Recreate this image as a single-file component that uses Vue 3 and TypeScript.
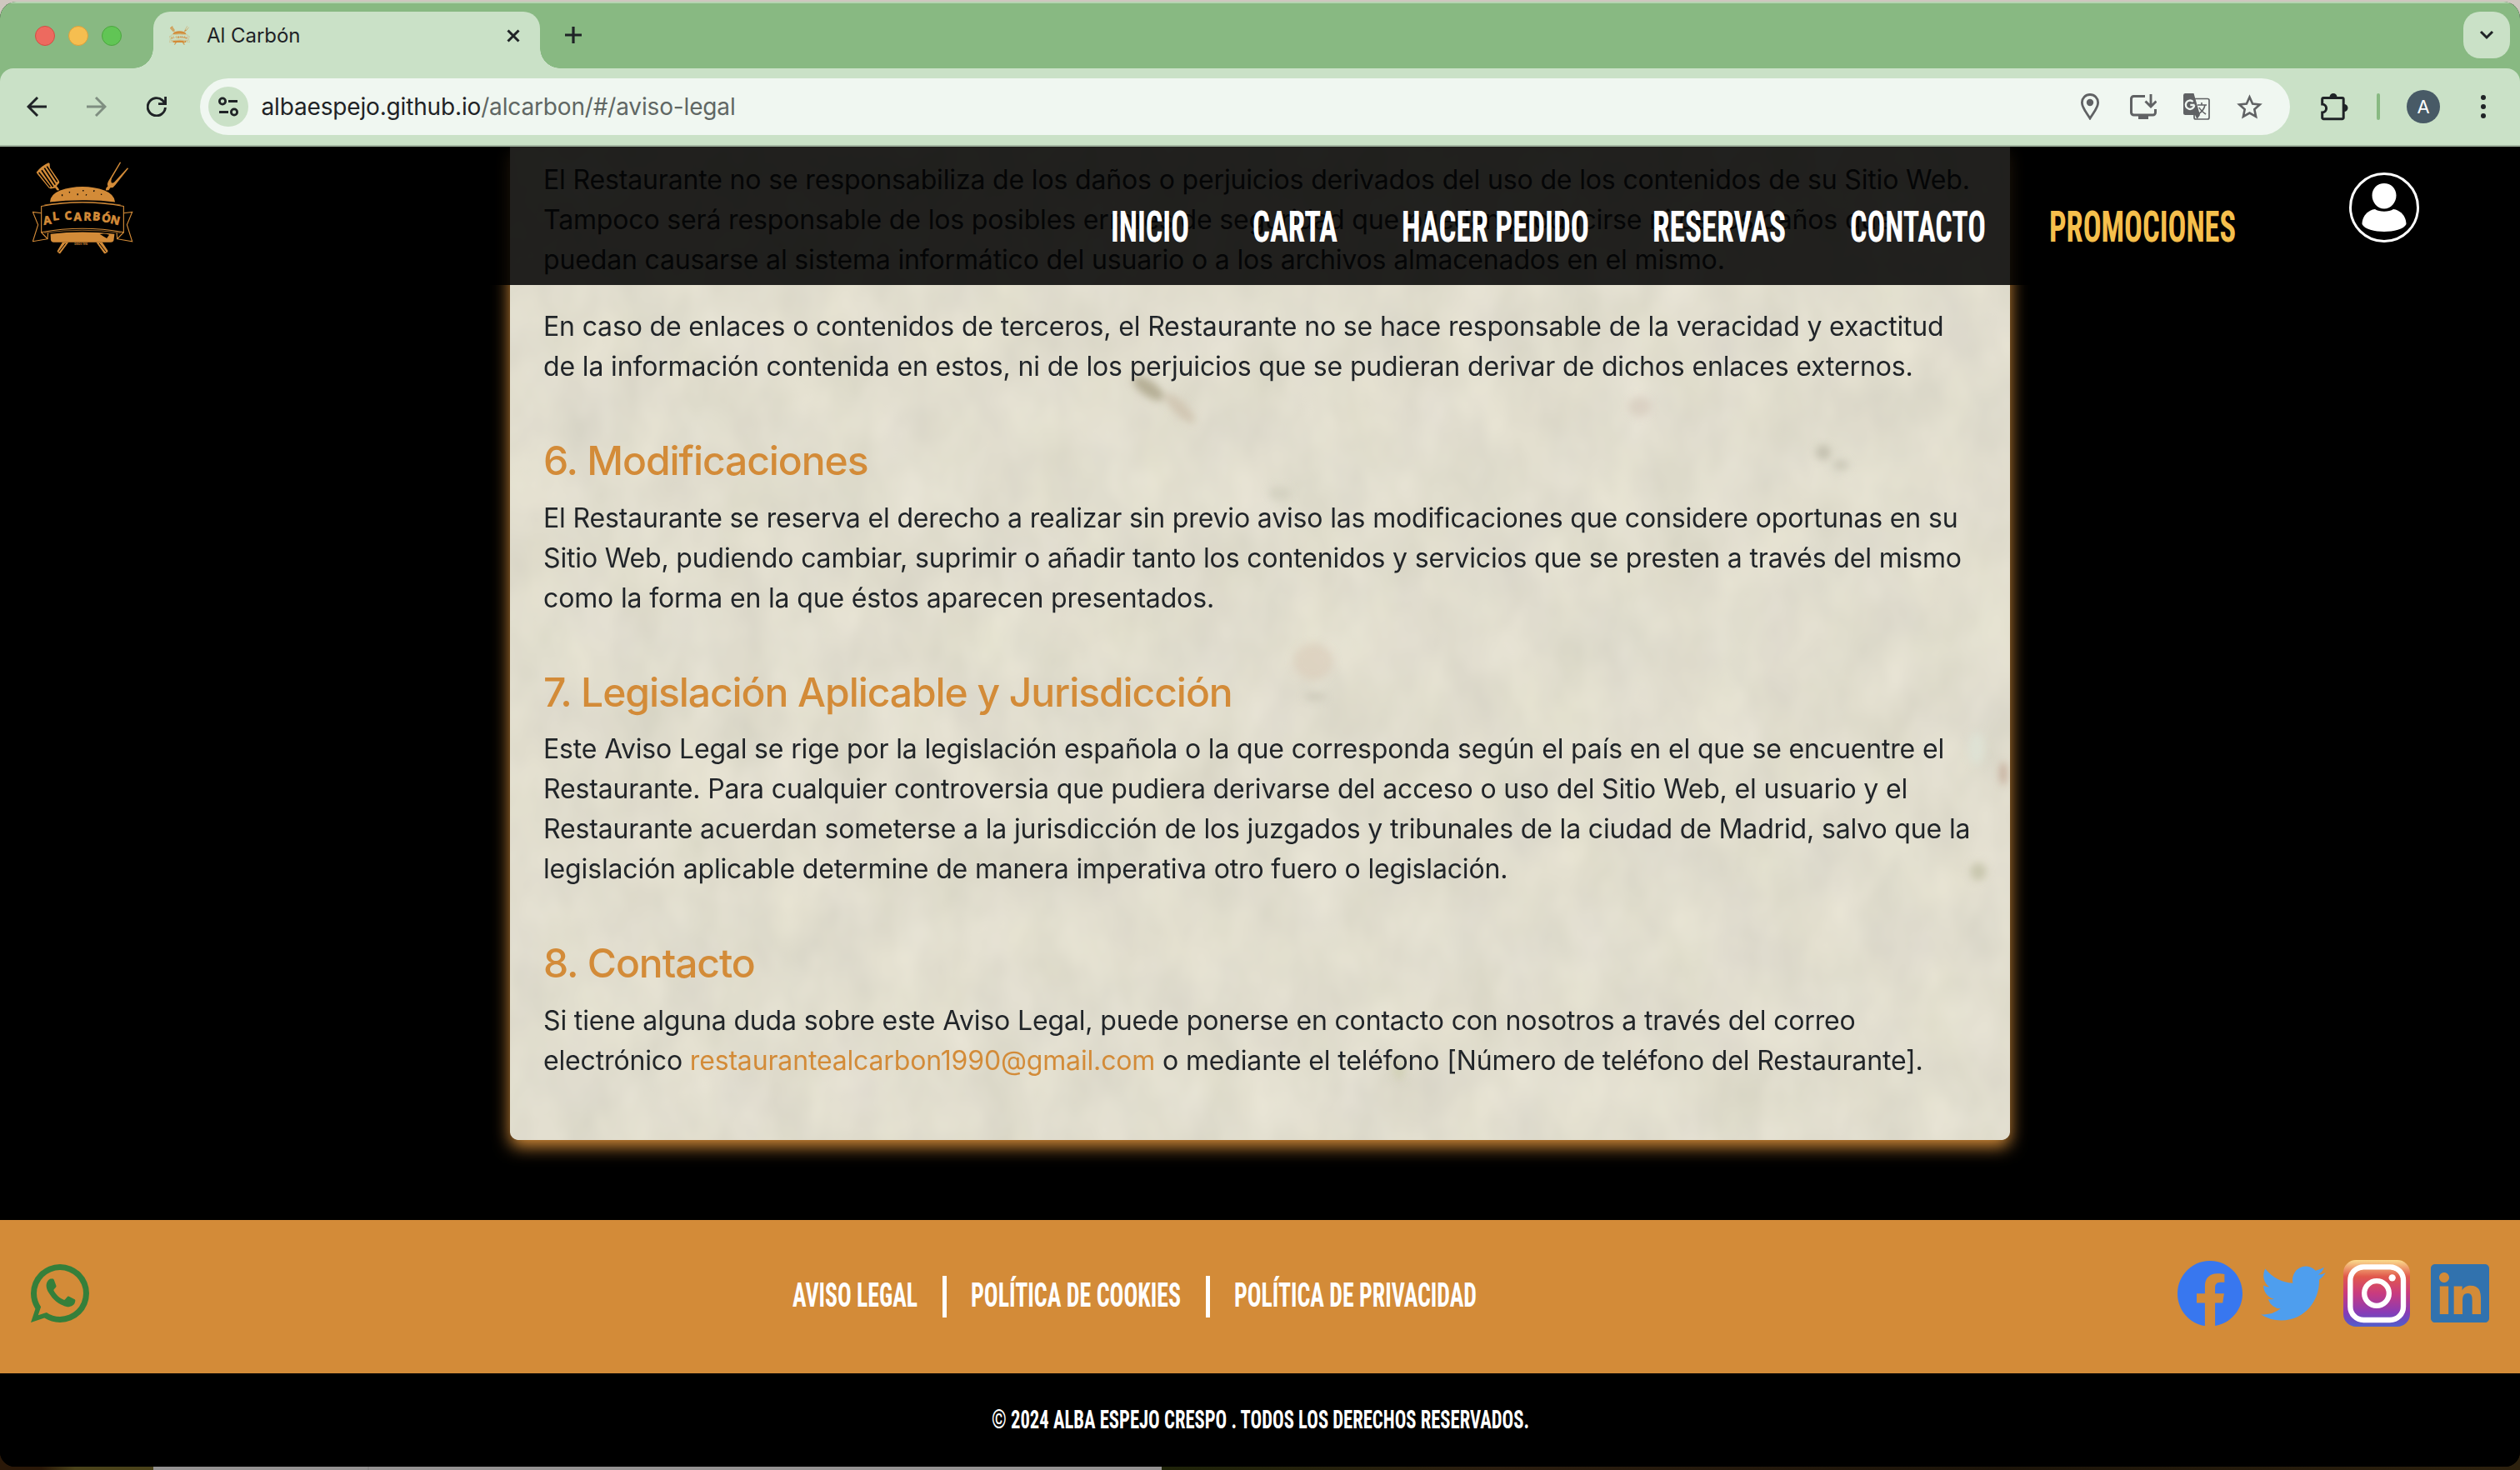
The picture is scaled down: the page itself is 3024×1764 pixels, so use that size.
<script setup lang="ts">
interface NavItem { label: string; width: number; promo?: boolean }
interface Section { title?: string; lines: string[] }

const nav: NavItem[] = [
  { label: 'INICIO', width: 90 },
  { label: 'CARTA', width: 98 },
  { label: 'HACER PEDIDO', width: 221 },
  { label: 'RESERVAS', width: 156 },
  { label: 'CONTACTO', width: 159 },
  { label: 'PROMOCIONES', width: 220, promo: true },
]

const sections: Section[] = [
  {
    lines: [
      'El Restaurante no se responsabiliza de los daños o perjuicios derivados del uso de los contenidos de su Sitio Web.',
      'Tampoco será responsable de los posibles errores de seguridad que puedan producirse ni de los daños que',
      'puedan causarse al sistema informático del usuario o a los archivos almacenados en el mismo.',
    ],
  },
  {
    lines: [
      'En caso de enlaces o contenidos de terceros, el Restaurante no se hace responsable de la veracidad y exactitud',
      'de la información contenida en estos, ni de los perjuicios que se pudieran derivar de dichos enlaces externos.',
    ],
  },
  {
    title: '6. Modificaciones',
    lines: [
      'El Restaurante se reserva el derecho a realizar sin previo aviso las modificaciones que considere oportunas en su',
      'Sitio Web, pudiendo cambiar, suprimir o añadir tanto los contenidos y servicios que se presten a través del mismo',
      'como la forma en la que éstos aparecen presentados.',
    ],
  },
  {
    title: '7. Legislación Aplicable y Jurisdicción',
    lines: [
      'Este Aviso Legal se rige por la legislación española o la que corresponda según el país en el que se encuentre el',
      'Restaurante. Para cualquier controversia que pudiera derivarse del acceso o uso del Sitio Web, el usuario y el',
      'Restaurante acuerdan someterse a la jurisdicción de los juzgados y tribunales de la ciudad de Madrid, salvo que la',
      'legislación aplicable determine de manera imperativa otro fuero o legislación.',
    ],
  },
]

const legal = [
  { label: 'AVISO LEGAL', width: 148 },
  { label: 'POLÍTICA DE COOKIES', width: 250 },
  { label: 'POLÍTICA DE PRIVACIDAD', width: 289 },
]

const brandLetters = [
  { c: 'A', x: 99, y: 268, r: -8 },
  { c: 'L', x: 132, y: 252, r: -6 },
  { c: 'C', x: 175, y: 251, r: -6 },
  { c: 'A', x: 207, y: 253, r: 0 },
  { c: 'R', x: 242, y: 252, r: 2 },
  { c: 'B', x: 274, y: 251, r: 5 },
  { c: 'Ó', x: 306, y: 256, r: 8 },
  { c: 'N', x: 337, y: 261, r: 14 },
]
</script>

<template>
  <svg class="defs" width="0" height="0" aria-hidden="true">
    <defs>
      <symbol id="brand" viewBox="58 40 364 334">
        <g fill="#d38b38">
          <path d="M72 78 Q92 54 116 44 L120 47 L121 62 L154 110 L155 116 L145 128 L152 137 L155 143 L147 144 L140 135 L124 138 L117 135 L75 84Z" />
          <path d="M374 41 L377 44 L344 100 Q340 110 343 116 Q349 119 355 112 L401 62 L404 65 L357 124 Q349 136 339 134 L333 143 L322 144 L324 135 L330 129 Q326 121 331 112Z" />
          <path d="M121 186 Q122 158 158 144 Q195 130 238 130 Q282 130 318 144 Q354 158 356 186 Q300 178 238 179 Q176 179 121 186Z" />
          <path d="M123 301 Q238 287 354 301 L351 325 Q349 331 341 331 L134 331 Q125 330 124 322Z" />
          <path d="M166 331 L188 331 L159 370 Q157 373 153 370 L148 366 Q146 363 149 360Z" />
          <path d="M288 331 L310 331 L330 361 Q331 364 328 367 L322 371 Q318 373 316 370Z" />
        </g>
        <g class="cuts" fill="none" stroke-width="5">
          <path d="M81 79 L122 132M91 71 L132 131M101 63 L140 123M110 57 L147 113" />
          <path stroke-width="3" d="M177 335 L153 366M299 335 L323 366" />
          <path stroke-width="4" d="M165 158v6M190 149l3 3M221 155v6M241 142v5M253 158l-2 4M281 143l-2 5M306 156l1 4" />
          <path class="notch" stroke="none" d="M301 302 Q318 297 335 304 L326 317 Q318 312 301 302Z" />
        </g>
        <g fill="none" stroke="#d38b38" stroke-width="3.4">
          <path d="M90 201 Q238 173 387 201 L387 295 Q238 268 90 295Z" />
          <path stroke-width="2" d="M101 196 Q238 176 376 196M101 297 Q238 278 376 297" />
          <path d="M90 226 L59 222 L78 268 L59 328 L112 319 L90 295M112 319 L114 297" />
          <path d="M387 226 L418 222 L399 268 L418 328 L364 319 L387 295M364 319 L362 297" />
        </g>
        <g class="brand-text">
          <text v-for="l in brandLetters" :key="l.x" :x="l.x" :y="l.y" :transform="`rotate(${l.r} ${l.x} ${l.y})`">{{ l.c }}</text>
        </g>
        <text x="209" y="341" class="since" textLength="48" lengthAdjust="spacingAndGlyphs">DESDE 1990</text>
      </symbol>
      <linearGradient id="insta" x1="0" y1="0" x2="0" y2="1">
        <stop offset="0" stop-color="#fbdc8c" /><stop offset=".25" stop-color="#e1584c" />
        <stop offset=".5" stop-color="#c93b7f" /><stop offset=".78" stop-color="#8a3bb5" />
        <stop offset=".92" stop-color="#6250c4" /><stop offset="1" stop-color="#5260cc" />
      </linearGradient>
    </defs>
  </svg>

  <div class="desktop">
    <div class="window">
      <div class="tabstrip">
        <div class="lights"><i class="red" /><i class="yellow" /><i class="green" /></div>
        <div class="tab">
          <svg class="favicon"><use href="#brand" /></svg>
          <span class="tab-title">Al Carbón</span>
          <svg width="16" height="16" viewBox="0 0 16 16" class="ink"><path d="M1.5 1.5l13 13M14.5 1.5l-13 13" stroke-width="3" /></svg>
        </div>
        <svg class="ink plus" width="22" height="22" viewBox="0 0 22 22"><path d="M11 1v20M1 11h20" stroke-width="3.2" /></svg>
        <div class="tab-search">
          <svg class="ink" width="18" height="12" viewBox="0 0 18 12"><path d="M2 2l7 7 7-7" stroke-width="3" /></svg>
        </div>
      </div>

      <div class="toolbar">
        <svg class="ink back" width="24" height="24" viewBox="0 0 24 24"><path d="M24 12H2M13 1L2 12l11 11" stroke-width="2.9" /></svg>
        <svg class="ink forward" width="24" height="24" viewBox="0 0 24 24"><path d="M0 12h22M11 1l11 11-11 11" stroke-width="2.9" /></svg>
        <svg class="ink reload" width="24" height="24" viewBox="0 0 24 24"><path d="M22.4 13A10.6 10.6 0 1 1 19 4.4L22 8M22.6 0v8.6H14" stroke-width="2.9" /></svg>
        <div class="omnibox">
          <span class="site">
            <svg class="ink" width="26" height="24" viewBox="0 0 26 24" stroke-width="2.8"><circle cx="6" cy="5.5" r="3.6" /><circle cx="20" cy="18.5" r="3.6" /><path d="M13 5.5h11M2 18.5h11" /></svg>
          </span>
          <span class="url"><b>albaespejo.github.io</b>/alcarbon/#/aviso-legal</span>
          <svg class="grey" width="22" height="32" viewBox="0 0 22 32"><path d="M11 1.5a9.6 9.6 0 0 0-9.6 9.7C1.4 17 6 22 11 30c5-8 9.6-13 9.6-18.8A9.6 9.6 0 0 0 11 1.5Z" stroke-width="2.8" /><circle cx="11" cy="11" r="4.2" class="solid" /></svg>
          <svg class="grey install" width="32" height="30" viewBox="0 0 32 30"><path d="M18 2.5H4.5a3 3 0 0 0-3 3v16.500a3 3 0 0 0 3 3h23a3 3 0 0 0 3-3V18" stroke-width="3" /><path d="M25 0v15M18.500 8.500L25 15l6.500-6.500" stroke-width="2.900" /><path class="solid" d="M10 25h12v5H10z" /></svg>
          <svg class="translate" width="34" height="34" viewBox="0 0 34 34">
            <rect x="14" y="7.5" width="18" height="24.5" rx="2" fill="none" stroke="#606264" stroke-width="1.7" />
            <path d="M3 1h10.500L21 27H3.500a2.500 2.500 0 0 1-2.500-2.500V3.500A2.500 2.500 0 0 1 3 1Z" fill="#606264" />
            <path d="M15 27h6l-3.500 5Z" fill="#606264" />
            <path d="M14.500 15H9.300M14.200 15.200A5.200 5.200 0 1 1 12.600 11" fill="none" stroke="#f0f7f1" stroke-width="2.4" />
            <path d="M18 15h11M23 12v3M27 15c-1 5-5 9-8 11M20 18c2 4 5 6 8 8" fill="none" stroke="#606264" stroke-width="1.6" />
          </svg>
          <svg class="grey star" width="31" height="30" viewBox="0 0 31 30"><path d="M15.500 3.500l3.600 8 8.700.9-6.500 5.900 1.800 8.600-7.600-4.400-7.600 4.400 1.800-8.600-6.500-5.900 8.700-.9Z" stroke-width="2.6" /></svg>
        </div>
        <svg class="ink puzzle" width="34" height="34" viewBox="0 0 34 34"><path d="M4.500 6.500h22.200a1.500 1.500 0 0 1 1.500 1.500v22.200a1.500 1.500 0 0 1-1.500 1.500H4.200a1.500 1.500 0 0 1-1.500-1.500V24c6.500-.5 6.500-9.500 0-10V8a1.500 1.500 0 0 1 1.500-1.500Z" stroke-width="3" /><path class="dark" d="M11.500 5.500a4.500 4.500 0 0 1 9 0ZM29 14a4.500 4.500 0 0 1 0 9Z" /></svg>
        <i class="divider" />
        <span class="avatar">A</span>
        <svg class="dots" width="6" height="28" viewBox="0 0 6 28"><circle cx="3" cy="3" r="3" /><circle cx="3" cy="14" r="3" /><circle cx="3" cy="25" r="3" /></svg>
      </div>

      <div class="page">
        <header>
          <svg class="logo"><use href="#brand" /></svg>
          <nav>
            <a v-for="n in nav" :key="n.label" :class="{ promo: n.promo }">
              <svg class="bebas" :width="n.width" height="50" overflow="visible"><text x="-3" y="44" font-size="51" :textLength="n.width + 4" lengthAdjust="spacingAndGlyphs">{{ n.label }}</text></svg>
            </a>
          </nav>
          <svg class="user" width="84" height="84" viewBox="0 0 84 84"><circle cx="42" cy="42" r="40.5" fill="none" stroke="#fff" stroke-width="3" /><path fill="#fff" d="M42 13c8 0 14.500 6 14.500 14.500S50 43.500 42 43.500 27.500 36 27.500 27.500 34 13 42 13ZM31 44c5 3.600 17 3.600 22 0 9 1 15.500 9 15.500 18C66 68 53 71 42 71S18 68 15.500 62C15.500 53 22 45 31 44Z" /></svg>
        </header>

        <main>
          <article>
            <svg class="paper" width="1800" height="1192" preserveAspectRatio="none">
              <filter id="grain" x="0" y="0" width="100%" height="100%" color-interpolation-filters="sRGB">
                <feTurbulence type="fractalNoise" baseFrequency=".016 .011" numOctaves="3" seed="8" />
                <feColorMatrix values=".07 .03 0 0 .831  .07 .02 0 0 .822  .06 .03 .02 0 .752  0 0 0 0 1" />
              </filter>
              <filter id="soft"><feGaussianBlur stdDeviation="5" /></filter>
              <rect width="1800" height="1192" filter="url(#grain)" />
              <g filter="url(#soft)">
                <ellipse cx="766" cy="290" rx="22" ry="9" transform="rotate(35 766 290)" fill="#b3ac92" opacity=".95" />
                <ellipse cx="804" cy="314" rx="24" ry="8" transform="rotate(45 804 314)" fill="#cfc4b0" opacity=".9" />
                <ellipse cx="1576" cy="367" rx="9" ry="9" fill="#bdbaa9" opacity=".8" />
                <ellipse cx="1597" cy="382" rx="10" ry="7" fill="#c3c0b0" opacity=".7" />
                <ellipse cx="964" cy="618" rx="24" ry="22" fill="#d8c9b8" opacity=".6" />
                <ellipse cx="966" cy="660" rx="14" ry="4" fill="#c5c1b0" opacity=".7" />
                <ellipse cx="1762" cy="870" rx="10" ry="11" fill="#c2c1a6" opacity=".8" />
                <ellipse cx="1792" cy="752" rx="4" ry="14" fill="#bb9c88" opacity=".8" />
                <ellipse cx="1760" cy="722" rx="10" ry="20" fill="#dfe3d6" opacity=".8" />
                <ellipse cx="1067" cy="1106" rx="8" ry="14" fill="#cfceb0" opacity=".7" />
                <ellipse cx="1356" cy="312" rx="14" ry="12" fill="#d5cabc" opacity=".7" />
                <ellipse cx="924" cy="416" rx="14" ry="9" fill="#ccc9b9" opacity=".6" />
              </g>
            </svg>
            <section v-for="(s, i) in sections" :key="i">
              <h2 v-if="s.title">{{ s.title }}</h2>
              <p><span v-for="l in s.lines" :key="l">{{ l }}</span></p>
            </section>
            <section>
              <h2>8. Contacto</h2>
              <p>
                <span>Si tiene alguna duda sobre este Aviso Legal, puede ponerse en contacto con nosotros a través del correo</span>
                <span>electrónico <a>restaurantealcarbon1990@gmail.com</a> o mediante el teléfono [Número de teléfono del Restaurante].</span>
              </p>
            </section>
          </article>
        </main>

        <footer>
          <svg class="whatsapp" width="84" height="84" viewBox="0 0 24 24"><path fill="#357f3a" d="M16.750 13.960c.250.130.410.200.460.300.060.110.040.610-.210 1.180-.200.560-1.240 1.100-1.700 1.120-.460.020-.470.360-2.960-.730-2.490-1.090-3.990-3.750-4.110-3.920-.120-.170-.960-1.380-.920-2.610.050-1.220.690-1.800.950-2.040.240-.260.510-.290.680-.260h.470c.150 0 .360-.060.550.450l.690 1.870c.060.130.100.280.010.440l-.270.410-.390.420c-.120.120-.260.250-.120.500.120.260.620 1.090 1.320 1.780.910.880 1.710 1.170 1.950 1.300.240.140.390.120.540-.040l.810-.940c.190-.250.350-.190.580-.110l1.670.880M12 2a10 10 0 0 1 10 10 10 10 0 0 1-10 10c-1.970 0-3.800-.570-5.350-1.550L2 22l1.550-4.650A9.969 9.969 0 0 1 2 12 10 10 0 0 1 12 2m0 2a8 8 0 0 0-8 8c0 1.720.540 3.310 1.460 4.610L4.500 19.500l2.890-.960A7.950 7.950 0 0 0 12 20a8 8 0 0 0 8-8 8 8 0 0 0-8-8z" /></svg>
          <div class="legal">
            <a v-for="l in legal" :key="l.label">
              <svg class="bebas" :width="l.width" height="50" overflow="visible"><text x="-1" y="37" font-size="40" :textLength="l.width + 2" lengthAdjust="spacingAndGlyphs">{{ l.label }}</text></svg>
            </a>
          </div>
          <div class="social">
            <svg width="78" height="78" viewBox="0 0 16 16"><path fill="#3877ef" d="M16 8.049c0-4.446-3.582-8.050-8-8.050C3.580 0-.002 3.603-.002 8.050c0 4.017 2.926 7.347 6.750 7.951v-5.625h-2.030V8.050H6.750V6.275c0-2.017 1.195-3.131 3.022-3.131.876 0 1.791.157 1.791.157v1.980h-1.009c-.993 0-1.303.621-1.303 1.258v1.510h2.218l-.354 2.326H9.250V16c3.824-.604 6.750-3.934 6.750-7.951" /></svg>
            <svg width="78" height="80" viewBox="0 .5 16 16" preserveAspectRatio="none"><path fill="#4e9eee" d="M5.026 15c6.038 0 9.341-5.003 9.341-9.334q.002-.211-.006-.422A6.700 6.700 0 0 0 16 3.542a6.700 6.700 0 0 1-1.889.518 3.300 3.300 0 0 0 1.447-1.817 6.500 6.500 0 0 1-2.087.793A3.286 3.286 0 0 0 7.875 6.030a9.320 9.320 0 0 1-6.767-3.429 3.290 3.290 0 0 0 1.018 4.382A3.300 3.300 0 0 1 .640 6.575v.045a3.290 3.290 0 0 0 2.632 3.218 3.200 3.200 0 0 1-.865.115 3 3 0 0 1-.614-.057 3.280 3.280 0 0 0 3.067 2.277A6.600 6.600 0 0 1 .780 13.580a6 6 0 0 1-.780-.045A9.340 9.340 0 0 0 5.026 15" /></svg>
            <svg class="instagram" width="80" height="80" viewBox="0 0 240 240"><rect width="240" height="240" rx="46" fill="url(#insta)" /><rect x="25" y="25" width="191" height="191" rx="48" fill="none" stroke="#fff" stroke-width="19" /><circle cx="120" cy="120" r="44.5" fill="none" stroke="#fff" stroke-width="19" /><circle cx="176" cy="64" r="12.5" fill="#fff" /></svg>
            <svg width="70" height="70" viewBox="0 32 448 448"><path fill="#3172ae" d="M416 32H31.900C14.300 32 0 46.500 0 64.300v383.400C0 465.500 14.300 480 31.900 480H416c17.600 0 32-14.500 32-32.300V64.300c0-17.800-14.400-32.300-32-32.300zM135.400 416H69V202.200h66.500V416zm-33.200-243c-21.300 0-38.500-17.300-38.500-38.500S80.900 96 102.200 96c21.200 0 38.500 17.300 38.500 38.500 0 21.300-17.200 38.500-38.500 38.500zm282.100 243h-66.400V312c0-24.800-.5-56.700-34.500-56.700-34.600 0-39.900 27-39.900 54.900V416h-66.400V202.200h63.700v29.200h.9c8.900-16.800 30.600-34.500 62.900-34.500 67.200 0 79.700 44.300 79.700 101.900V416z" /></svg>
          </div>
        </footer>
        <div class="copyright">
          <svg class="bebas" width="644" height="50" overflow="visible"><text x="0" y="37.5" font-size="32" textLength="645" lengthAdjust="spacingAndGlyphs">© 2024 ALBA ESPEJO CRESPO . TODOS LOS DERECHOS RESERVADOS.</text></svg>
        </div>
      </div>
    </div>
  </div>
</template>

<style>
body { margin: 0; overflow: hidden; }
</style>

<style scoped>
* { box-sizing: border-box; }
svg { display: block; flex: none; }
.defs { position: absolute; }
.desktop {
  width: 3024px; height: 1764px; padding-top: 2px; overflow: hidden;
  background:
    linear-gradient(90deg, #2a1808 0 50px, #4b431a 90px 184px, #949292 184px 441px, #8c8a8a 441px 443px, #949292 443px 1394px, #1f2409 1394px, #2b1d0f 1800px, #1c1409 2400px, #2d210e) 0 1740px / 100% 24px no-repeat,
    #cfc7bf;
  font-family: Inter, "Liberation Sans", sans-serif;
}
.window { height: 1758px; border-radius: 20px 20px 18px 18px; overflow: hidden; background: #000; display: flex; flex-direction: column; }
.tabstrip { height: 98px; margin-bottom: -18px; flex: none; background: #88b982; border-top: 2px solid #b5d4b1; display: flex; align-items: flex-start; padding-left: 42px; }
.lights { display: flex; gap: 16px; padding-top: 27px; width: 142px; }
.lights i { width: 24px; height: 24px; border-radius: 50%; border: 1px solid #d24d43; }
.red { background: #ed6a5f; }
.yellow { background: #f6be50; border-color: #dba03c !important; }
.green { background: #61c555; border-color: #4ca63f !important; }
.tab { position: relative; margin-top: 10px; width: 464px; height: 72px; border-radius: 20px 20px 0 0; background: #cae1c7; display: flex; align-items: center; padding: 0 24px 15px 19px; }
.tab::before, .tab::after { content: ""; position: absolute; bottom: 4px; width: 24px; height: 24px; }
.tab::before { left: -24px; background: radial-gradient(circle at 0 0, transparent 23.5px, #cae1c7 24px); }
.tab::after { right: -24px; background: radial-gradient(circle at 100% 0, transparent 23.5px, #cae1c7 24px); }
.favicon { width: 25px; height: 23px; --cut: #cae1c7; }
.tab-title { flex: 1; margin-left: 20px; font-size: 24px; color: #1f2326; letter-spacing: -.05px; }
.ink { fill: none; stroke: #1f2326; }
.plus { margin: 27px 0 0 29px; }
.tab-search { margin: 10px 12px 0 auto; width: 56px; height: 56px; border-radius: 20px; background: #cae1c7; display: grid; place-items: center; }
.toolbar { height: 94px; flex: none; position: relative; background: #cae1c7; border-bottom: 2px solid #a1b49f; border-radius: 16px 16px 0 0; display: flex; align-items: center; padding: 0 41px 0 32px; }
.forward { margin-left: 48px; opacity: .43; }
.reload { margin-left: 48px; }
.omnibox { margin-left: 40px; width: 2508px; height: 68px; border-radius: 34px; background: #f0f7f1; display: flex; align-items: center; padding: 0 33px 0 10px; }
.site { width: 48px; height: 48px; border-radius: 50%; background: #cae1c7; display: grid; place-items: center; }
.url { flex: 1; margin-left: 15.500px; font-size: 28px; letter-spacing: -.16px; color: #606764; white-space: nowrap; }
.url b { font-weight: 400; color: #1f2326; }
.grey { fill: none; stroke: #606264; }
.grey .solid { fill: #606264; stroke: none; }
.install { margin-left: 37px; }
.translate { margin-left: 31px; }
.star { margin-left: 31px; }
.puzzle { margin-left: 36px; }
.dark { fill: #1f2326; stroke: none; }
.divider { margin-left: 34px; width: 4px; height: 32px; border-radius: 2px; background: #88b982; }
.avatar { margin-left: 32px; width: 40px; height: 40px; border-radius: 50%; background: #485a66; color: #fff; font-size: 22px; line-height: 41px; text-align: center; }
.dots { margin-left: 49px; fill: #1f2326; }

.page { flex: 1; position: relative; background: #000; display: flex; flex-direction: column; overflow: hidden; }
header { position: absolute; z-index: 2; top: 0; left: 0; right: 0; height: 166px; background: rgba(0, 0, 0, .855); display: flex; align-items: flex-start; }
.logo { width: 121px; height: 111px; margin: 18px 0 0 39px; --cut: #000; }
.cuts { stroke: var(--cut); }
.notch { fill: var(--cut); }
.brand-text { fill: #d38b38; stroke: #d38b38; stroke-width: 2; font: 700 41px "Open Sans", sans-serif; }
.since { fill: #d38b38; font: 700 8px "Open Sans", sans-serif; }
nav { display: flex; gap: 80.500px; margin: 70px 137px 0 auto; }
.bebas { font-family: Roboto, "Liberation Sans", sans-serif; font-weight: 700; font-stretch: 75%; fill: #fff; }
.promo .bebas { fill: #f5bf4c; }
.user { margin: 31px 121px 0 0; }
main { height: 1288px; flex: none; display: flex; justify-content: center; }
article { position: relative; width: 1800px; height: 1192px; padding: 16px 40px; border-radius: 0 0 12px 12px; background: #e0dccc; box-shadow: 0 8px 20px #d38b38; color: #212529; }
.paper { position: absolute; inset: 0; border-radius: 0 0 10px 10px; }
section { position: relative; margin-bottom: 32px; }
section:nth-of-type(n + 2) { margin-bottom: 60px; }
p { margin: 0; font-size: 32px; line-height: 48px; letter-spacing: -.155px; }
p span { display: block; white-space: nowrap; }
p a { color: #d38b38; }
h2 { margin: 0 0 16px; font-size: 48px; line-height: 57.600px; font-weight: 500; letter-spacing: -1.070px; color: #d38b38; white-space: nowrap; }
footer { height: 184px; flex: none; background: #d38b38; display: flex; align-items: flex-start; padding: 0 37px 0 30px; }
.whatsapp { margin-top: 46px; }
.legal { display: flex; margin: 67px auto 0 838px; }
.legal a + a { margin-left: 31px; padding-left: 30px; border-left: 5px solid #fff; }
.social { display: flex; align-items: center; gap: 22px; margin-top: 48px; }
.instagram { margin: 0 3px 0 -1px; }
.copyright { display: flex; justify-content: center; padding-top: 28px; }
</style>
